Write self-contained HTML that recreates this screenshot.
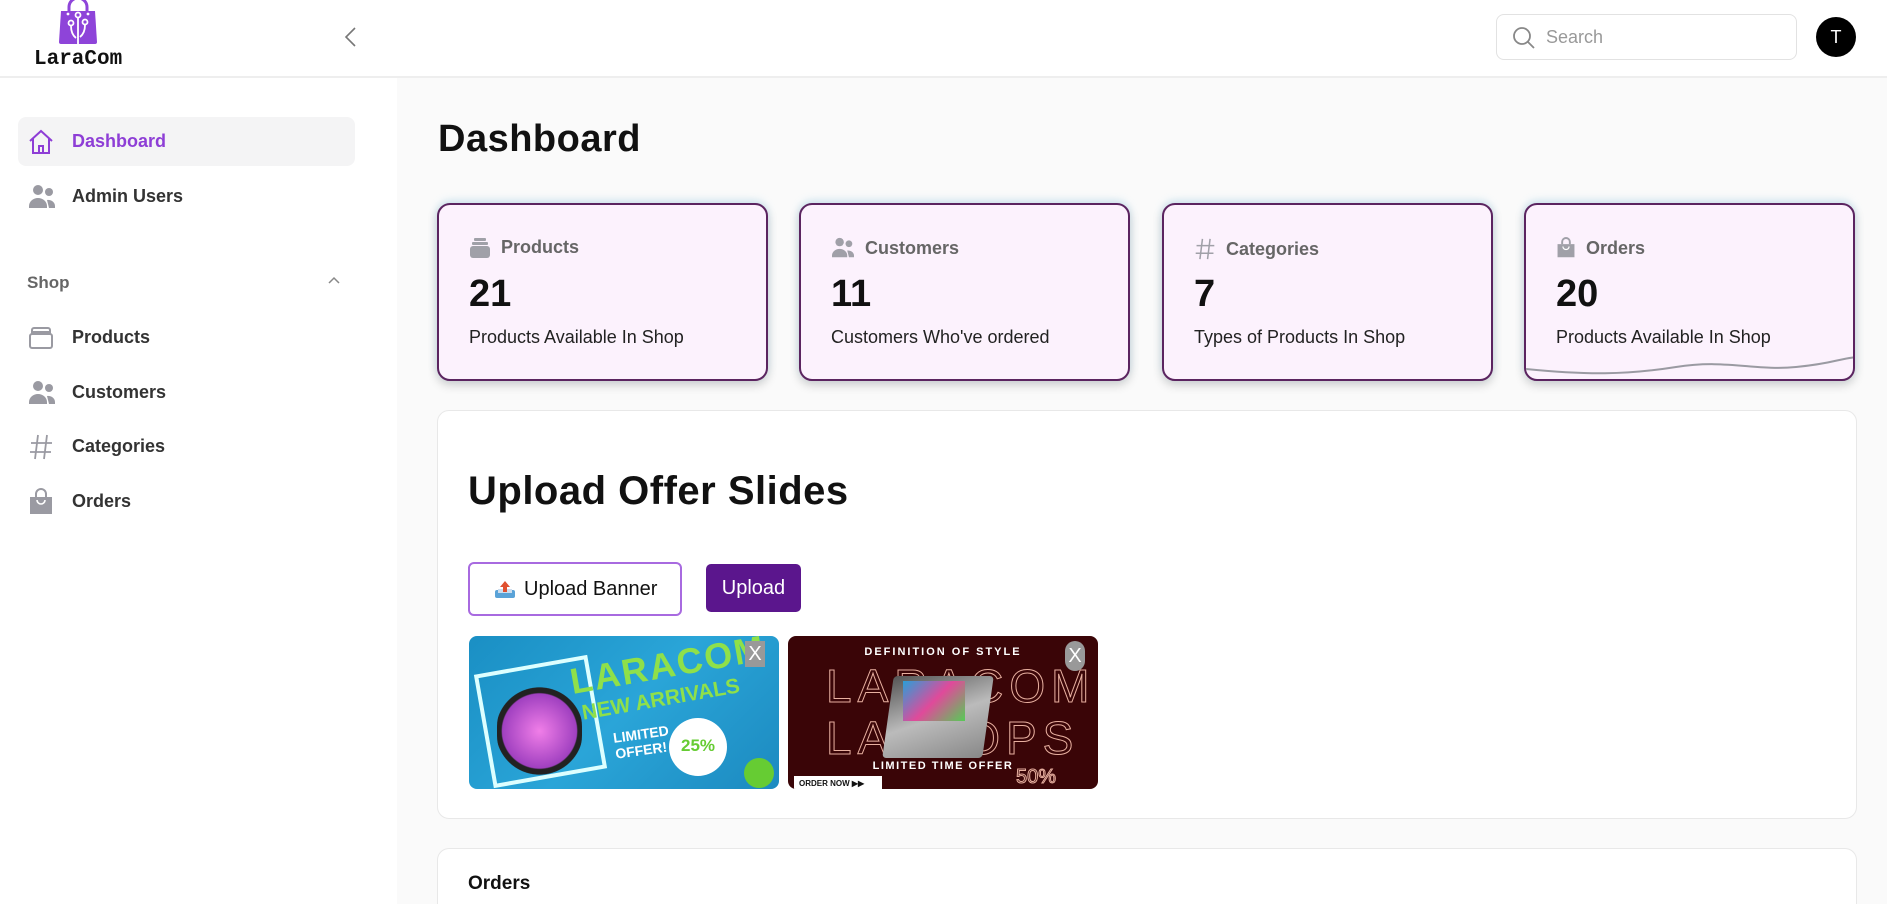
<!DOCTYPE html>
<html><head><meta charset="utf-8"><style>
*{box-sizing:border-box;margin:0;padding:0}
html{width:1887px;height:904px;overflow:hidden}
body{width:1887px;height:904px;overflow:hidden;background:#fafafa;font-family:"Liberation Sans",sans-serif;color:#111;position:relative}
.hdr{position:absolute;left:0;top:0;width:1887px;height:78px;background:#fff;border-bottom:2px solid #eee}
.side{position:absolute;left:0;top:78px;width:397px;height:826px;background:#fff}
.nav{position:absolute;left:18px;width:337px;height:49px;display:flex;align-items:center;font-size:18px;font-weight:bold;color:#333}
.nav svg{position:absolute;left:10px}
.nav span{position:absolute;left:54px}
.card{position:absolute;top:203px;width:331px;height:178px;background:#fcf2fd;border:2px solid #5b2460;border-radius:13px;box-shadow:0 -3px 8px rgba(140,200,230,.35),0 4px 10px rgba(0,0,0,.18);overflow:hidden}
.card .lab{position:absolute;left:30px;top:32px;font-size:18px;font-weight:bold;color:#666;display:flex;align-items:center}
.card .lab svg{margin-right:10px}
.card .num{position:absolute;left:30px;top:68px;font-size:38px;font-weight:bold;color:#111}
.card .desc{position:absolute;left:30px;top:122px;font-size:18px;color:#222}
.panel{position:absolute;left:437px;width:1420px;background:#fff;border:1px solid #e8e8e8;border-radius:12px}
</style></head><body>
<div class="hdr">
<svg style="position:absolute;left:56px;top:0" width="44" height="45" viewBox="0 0 44 45"><path d="M13 12 V7 a9 9 0 0 1 18 0 V12" fill="none" stroke="#8e44d9" stroke-width="3"/><path d="M5 11 H39 L41 42 a2 2 0 0 1 -2 2 H5 a2 2 0 0 1 -2 -2Z" fill="#8e44d9"/><g stroke="#fff" stroke-width="1.8" fill="none"><circle cx="22" cy="15" r="2.5"/><circle cx="15" cy="23" r="2.5"/><circle cx="29" cy="22" r="2.5"/><path d="M22 18 V44 M15 26 q0 8 5 12 M29 25 q0 8 -5 12"/></g><circle cx="12" cy="14" r="1.4" fill="#fff"/><circle cx="32" cy="14" r="1.4" fill="#fff"/></svg>
<div style="position:absolute;left:34px;top:48px;font-family:'Liberation Mono',monospace;font-weight:bold;font-size:21px;color:#111">LaraCom</div>
<svg style="position:absolute;left:343px;top:26px" width="16" height="22" viewBox="0 0 16 22"><path d="M12 2 L3 11 L12 20" fill="none" stroke="#777" stroke-width="1.6"/></svg>
<div style="position:absolute;left:1496px;top:14px;width:301px;height:46px;border:1px solid #e2e2e2;border-radius:8px;background:#fff">
<svg style="position:absolute;left:15px;top:11px" width="24" height="24" viewBox="0 0 24 24"><circle cx="10" cy="10" r="8" fill="none" stroke="#888" stroke-width="1.8"/><path d="M16 16 L22 22" stroke="#888" stroke-width="1.8"/></svg>
<span style="position:absolute;left:49px;top:12px;font-size:18px;color:#999">Search</span></div>
<div style="position:absolute;left:1816px;top:17px;width:40px;height:40px;border-radius:50%;background:#000;color:#fff;font-size:18px;text-align:center;line-height:40px">T</div>
</div>
<div class="side">
<div class="nav" style="top:39px;background:#f4f4f5;border-radius:8px;color:#8e3ed6">
<svg width="26" height="26" viewBox="0 0 26 26" fill="none" stroke="#8e3ed6" stroke-width="2"><path d="M2 12 L13 2 L24 12 M5 9 V24 H21 V9 M11 24 V17 H15 V24"/></svg><span>Dashboard</span></div>
<div class="nav" style="top:94px"><svg width="28" height="26" viewBox="0 0 28 26" fill="#9a9aa2"><circle cx="10" cy="6" r="5"/><circle cx="21" cy="8" r="4"/><path d="M1 22 a9 8 0 0 1 18 0 v2 H1Z"/><path d="M19 16 a7 6 0 0 1 8 6 v2 h-6z"/></svg><span>Admin Users</span></div>
<div style="position:absolute;left:27px;top:195px;font-size:17px;font-weight:bold;color:#666">Shop</div>
<svg style="position:absolute;left:327px;top:197px" width="14" height="10" viewBox="0 0 14 10"><path d="M2 8 L7 3 L12 8" fill="none" stroke="#888" stroke-width="1.5"/></svg>
<div class="nav" style="top:235px"><svg width="26" height="24" viewBox="0 0 26 24" fill="none" stroke="#9a9aa2" stroke-width="2"><rect x="2" y="8" width="22" height="14" rx="2"/><path d="M4 8 V4 a2 2 0 0 1 2-2 H20 a2 2 0 0 1 2 2 V8 M3 6 H23"/></svg><span>Products</span></div>
<div class="nav" style="top:290px"><svg width="28" height="26" viewBox="0 0 28 26" fill="#9a9aa2"><circle cx="10" cy="6" r="5"/><circle cx="21" cy="8" r="4"/><path d="M1 22 a9 8 0 0 1 18 0 v2 H1Z"/><path d="M19 16 a7 6 0 0 1 8 6 v2 h-6z"/></svg><span>Customers</span></div>
<div class="nav" style="top:344px"><svg width="26" height="28" viewBox="0 0 26 28" stroke="#9a9aa2" stroke-width="1.8"><path d="M10 2 L7 26 M19 2 L16 26 M3 10 H24 M2 19 H23"/></svg><span>Categories</span></div>
<div class="nav" style="top:399px"><svg width="26" height="28" viewBox="0 0 26 28"><path d="M8 9 V6 a5 5 0 0 1 10 0 V9" fill="none" stroke="#9a9aa2" stroke-width="2"/><path d="M2 9 H24 V26 H2Z" fill="#9a9aa2"/><path d="M9 12 a4 4 0 0 0 8 0" fill="none" stroke="#fff" stroke-width="1.6"/></svg><span>Orders</span></div>
</div>
<div style="position:absolute;left:438px;top:118px;font-size:38px;font-weight:bold;color:#111;letter-spacing:0.5px">Dashboard</div>

<div class="card" style="left:437px"><div class="lab"><svg width="22" height="20" viewBox="0 0 22 20" fill="#a0a0a8"><rect x="1" y="8" width="20" height="12" rx="3"/><rect x="3" y="4" width="16" height="3" rx="1"/><rect x="5" y="0" width="12" height="3" rx="1"/></svg>Products</div><div class="num">21</div><div class="desc">Products Available In Shop</div></div>
<div class="card" style="left:799px"><div class="lab"><svg width="24" height="22" viewBox="0 0 28 26" fill="#a0a0a8"><circle cx="10" cy="6" r="5"/><circle cx="21" cy="8" r="4"/><path d="M1 22 a9 8 0 0 1 18 0 v2 H1Z"/><path d="M19 16 a7 6 0 0 1 8 6 v2 h-6z"/></svg>Customers</div><div class="num">11</div><div class="desc">Customers Who've ordered</div></div>
<div class="card" style="left:1162px"><div class="lab"><svg width="22" height="24" viewBox="0 0 26 28" stroke="#a0a0a8" stroke-width="1.8"><path d="M10 2 L7 26 M19 2 L16 26 M3 10 H24 M2 19 H23"/></svg>Categories</div><div class="num">7</div><div class="desc">Types of Products In Shop</div></div>
<div class="card" style="left:1524px"><div class="lab"><svg width="20" height="22" viewBox="0 0 26 28"><path d="M8 9 V6 a5 5 0 0 1 10 0 V9" fill="none" stroke="#a0a0a8" stroke-width="2.5"/><path d="M2 9 H24 V26 H2Z" fill="#a0a0a8"/><path d="M9 12 a4 4 0 0 0 8 0" fill="none" stroke="#fff" stroke-width="1.6"/></svg>Orders</div><div class="num">20</div><div class="desc">Products Available In Shop</div>
<svg style="position:absolute;left:0;bottom:0" width="331" height="30" viewBox="0 0 331 30"><path d="M0 20 C60 26 100 26 150 18 S230 22 270 18 S310 10 331 8" fill="none" stroke="#9a9aa2" stroke-width="2"/></svg></div>

<div class="panel" style="top:410px;height:409px">
<div style="position:absolute;left:30px;top:58px;font-size:40px;font-weight:bold;color:#111;letter-spacing:0.5px">Upload Offer Slides</div>
<div style="position:absolute;left:30px;top:151px;width:214px;height:54px;border:2px solid #a86ae0;border-radius:6px;font-size:20px;color:#111;display:flex;align-items:center;padding-left:24px">
<svg width="22" height="20" viewBox="0 0 22 20" style="margin-right:8px"><rect x="1" y="11" width="20" height="8" rx="2" fill="#5aa3d8"/><rect x="4" y="10" width="14" height="4" fill="#cde"/><path d="M11 2 L16 8 H13 V13 H9 V8 H6Z" fill="#e05030"/></svg>Upload Banner</div>
<div style="position:absolute;left:268px;top:153px;width:95px;height:48px;background:#5b168d;border-radius:5px;color:#fff;font-size:20px;text-align:center;line-height:48px">Upload</div>
<div style="position:absolute;left:31px;top:225px;width:310px;height:153px;border-radius:8px;overflow:hidden;background:linear-gradient(135deg,#1a8fc4,#2aa5d8 50%,#1c8ac0)">
<div style="position:absolute;left:14px;top:28px;width:115px;height:115px;border:4px solid #dff;transform:rotate(-10deg)"></div>
<div style="position:absolute;left:28px;top:50px;width:85px;height:90px;border-radius:45%;background:radial-gradient(circle,#f07ee8,#a040c0 60%,#222 62%,#222 70%,transparent 71%)"></div>
<div style="position:absolute;left:100px;top:8px;font-size:36px;font-weight:bold;color:#8fe04a;transform:rotate(-10deg);letter-spacing:2px">LARACOM</div>
<div style="position:absolute;left:112px;top:52px;font-size:21px;font-weight:bold;color:#8fe04a;transform:rotate(-10deg)">NEW ARRIVALS</div>
<div style="position:absolute;left:145px;top:90px;font-size:14px;font-weight:bold;color:#fff;line-height:16px;transform:rotate(-8deg)">LIMITED<br>OFFER!</div>
<div style="position:absolute;left:200px;top:82px;width:58px;height:58px;border-radius:50%;background:#fff;color:#6c3;font-weight:bold;font-size:17px;text-align:center;padding-top:18px">25%</div>
<div style="position:absolute;left:275px;top:122px;width:30px;height:30px;border-radius:50%;background:#6c3"></div>
<div style="position:absolute;left:276px;top:5px;width:20px;height:26px;background:#999;color:#fff;font-size:20px;text-align:center;line-height:26px">X</div>
</div>
<div style="position:absolute;left:350px;top:225px;width:310px;height:153px;border-radius:8px;overflow:hidden;background:#3a0507">
<div style="position:absolute;left:0;width:310px;top:10px;text-align:center;color:#fff;font-size:11px;font-weight:bold;letter-spacing:2px">DEFINITION OF STYLE</div>
<div style="position:absolute;left:38px;top:24px;font-size:46px;color:transparent;-webkit-text-stroke:1px #e8b0a0;letter-spacing:6px;line-height:52px">LARACOM<br>LAPTOPS</div>
<div style="position:absolute;left:100px;top:40px;width:100px;height:82px;background:linear-gradient(160deg,#555,#bbb 50%,#888);transform:skewX(-8deg);border-radius:4px"></div>
<div style="position:absolute;left:115px;top:45px;width:62px;height:40px;background:linear-gradient(135deg,#2a9fd8,#e04a9a,#5c5)"></div>
<div style="position:absolute;left:0;width:310px;top:124px;text-align:center;color:#fff;font-size:11px;font-weight:bold;letter-spacing:1.5px">LIMITED TIME OFFER</div>
<div style="position:absolute;left:6px;top:140px;width:88px;height:14px;background:#fff;font-size:8px;font-weight:bold;padding:3px 5px">ORDER NOW ▶▶</div>
<div style="position:absolute;left:228px;top:130px;font-size:20px;color:transparent;-webkit-text-stroke:1px #e8b0a0">50% OFF</div>
<div style="position:absolute;left:277px;top:5px;width:20px;height:30px;border-radius:10px;background:#999;color:#fff;font-size:20px;text-align:center;line-height:30px">X</div>
</div>
</div>
<div class="panel" style="top:848px;height:56px;border-bottom:none;border-radius:12px 12px 0 0">
<div style="position:absolute;left:30px;top:24px;font-size:19px;font-weight:bold;color:#111">Orders</div>
</div>
</body></html>
